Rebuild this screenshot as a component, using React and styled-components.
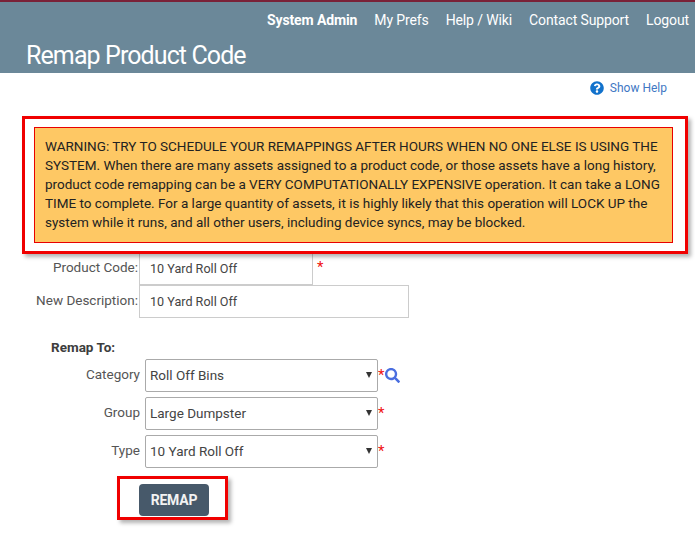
import styled, { createGlobalStyle } from "styled-components";
import { FaQuestionCircle, FaSearch } from "react-icons/fa";

const GlobalStyle = createGlobalStyle`
    body {
        margin: 0;
        background: #fff;
        font-family: Roboto, "Liberation Sans", sans-serif;
        color: #444;
    }
`
const Page = styled.div`
    width: 695px;
    height: 542px;
    overflow: hidden;
`
const Header = styled.header`
    height: 71px;
    background: #6b8899;
    border-top: 2px solid #7a2238;
    color: #fff;
    display: flex;
    flex-direction: column;
`
const Nav = styled.nav`
    display: flex;
    justify-content: flex-end;
    gap: 17px;
    padding: 8px 6px 0 0;
    font-size: 14px;
    line-height: 20px;
    letter-spacing: -0.12px;
`
const NavLink = styled.a`
    color: #fff;
    font-weight: ${(props) => (props.$active ? 700 : 400)};
`
const Title = styled.h1`
    margin: 11px 0 0 26px;
    font-size: 25px;
    line-height: 30px;
    font-weight: 400;
    letter-spacing: -0.9px;
`
const HelpBar = styled.div`
    height: 43px;
    display: flex;
    justify-content: flex-end;
    align-items: flex-start;
    gap: 6px;
    padding: 8px 28px 0 0;
    font-size: 12px;
    line-height: 15px;
    color: #3f78c4;
    box-sizing: border-box;
    svg {
        color: #1272cc;
        font-size: 14px;
    }
`
const Annotated = styled.div`
    position: relative;
    z-index: 1;
    box-sizing: border-box;
    border: 3px solid #f00000;
    box-shadow: 3px 3px 4px rgba(0, 0, 0, 0.3);
`
const WarningFrame = styled(Annotated)`
    width: 666px;
    height: 138px;
    margin-left: 22px;
    padding: 8px 12px 0 9px;
    background: #fff;
`
const Warning = styled.div`
    box-sizing: border-box;
    height: 116px;
    padding: 9px 10px 0;
    background: #fec864;
    border: 1px solid #e80000;
    color: #222;
    font-size: 13.5px;
    line-height: 19px;
`
const Fields = styled.div`
    display: flex;
    flex-direction: column;
    margin-top: -4px;
`
const TextRow = styled.div`
    display: flex;
    align-items: flex-start;
`
const TextLabel = styled.label`
    width: 138px;
    padding-top: ${(props) => props.$top}px;
    text-align: right;
    font-size: 13.5px;
    line-height: 18px;
    color: #555;
`
const TextInput = styled.div`
    box-sizing: border-box;
    width: ${(props) => props.$width}px;
    height: ${(props) => props.$height}px;
    margin-left: 1px;
    padding: ${(props) => props.$top}px 0 0 10px;
    border: 1px solid #ccc;
    font-size: 12.6px;
    line-height: 18px;
    color: #444;
`
const Star = styled.span`
    color: #f01010;
    font-size: 15px;
    line-height: 18px;
`
const RequiredStar = styled(Star)`
    margin: ${(props) => props.$top}px 0 0 ${(props) => props.$left}px;
`
const RemapHeading = styled.div`
    margin: 20px 0 0 51px;
    font-size: 13.5px;
    line-height: 18px;
    font-weight: 700;
    color: #3d3d3d;
`
const SelectList = styled.div`
    display: flex;
    flex-direction: column;
    gap: 5px;
    margin-top: 3px;
`
const SelectRow = styled.div`
    display: flex;
    align-items: flex-start;
`
const SelectLabel = styled.label`
    width: 140px;
    padding-top: 6px;
    text-align: right;
    font-size: 13.5px;
    line-height: 18px;
    color: #555;
`
const SelectBox = styled.div`
    position: relative;
    width: 233px;
    height: 33px;
    margin: 0 0 0 5px;
    &::after {
        content: "";
        position: absolute;
        right: 6px;
        top: 13px;
        border-left: 3.5px solid transparent;
        border-right: 3.5px solid transparent;
        border-top: 6px solid #333;
    }
`
const Select = styled.select`
    appearance: none;
    box-sizing: border-box;
    width: 100%;
    height: 100%;
    padding: 0 0 2px 4px;
    background: #fff;
    border: 1px solid #aaa;
    border-radius: 2px;
    font-family: inherit;
    font-size: 13.5px;
    color: #444;
`
const SearchIcon = styled(FaSearch)`
    margin: 9px 0 0 1px;
    color: #4a6ee0;
    font-size: 15px;
`
const ButtonFrame = styled(Annotated)`
    width: 111px;
    height: 44px;
    margin: 8px 0 0 117px;
    padding: 5px 0 0 19px;
`
const RemapButton = styled.button`
    width: 70px;
    height: 32px;
    padding: 0;
    background: #47596a;
    border: none;
    border-radius: 4px;
    color: #f2f2f2;
    font-family: inherit;
    font-size: 14px;
    font-weight: 700;
    letter-spacing: -0.2px;
`

const selects = [
    { label: "Category", value: "Roll Off Bins", search: true },
    { label: "Group", value: "Large Dumpster" },
    { label: "Type", value: "10 Yard Roll Off" },
];

const App = () => {
    return (
        <Page>
            <GlobalStyle />
            <Header>
                <Nav>
                    <NavLink $active>System Admin</NavLink>
                    <NavLink>My Prefs</NavLink>
                    <NavLink>Help / Wiki</NavLink>
                    <NavLink>Contact Support</NavLink>
                    <NavLink>Logout</NavLink>
                </Nav>
                <Title>Remap Product Code</Title>
            </Header>
            <HelpBar>
                <FaQuestionCircle />
                <span>Show Help</span>
            </HelpBar>
            <WarningFrame>
                <Warning>
                    WARNING: TRY TO SCHEDULE YOUR REMAPPINGS AFTER HOURS WHEN NO ONE ELSE IS USING THE SYSTEM. When there are many assets assigned to a product code, or those assets have a long history, product code remapping can be a VERY COMPUTATIONALLY EXPENSIVE operation. It can take a LONG TIME to complete. For a large quantity of assets, it is highly likely that this operation will LOCK UP the system while it runs, and all other users, including device syncs, may be blocked.
                </Warning>
            </WarningFrame>
            <Fields>
                <TextRow>
                    <TextLabel $top={8}>Product Code:</TextLabel>
                    <TextInput $width={174} $height={35} $top={9}>10 Yard Roll Off</TextInput>
                    <RequiredStar $top={8} $left={4}>*</RequiredStar>
                </TextRow>
                <TextRow>
                    <TextLabel $top={6}>New Description:</TextLabel>
                    <TextInput $width={270} $height={33} $top={7}>10 Yard Roll Off</TextInput>
                </TextRow>
            </Fields>
            <RemapHeading>Remap To:</RemapHeading>
            <SelectList>
                {selects.map((item) => (
                    <SelectRow key={item.label}>
                        <SelectLabel>{item.label}</SelectLabel>
                        <SelectBox>
                            <Select defaultValue={item.value}>
                                <option>{item.value}</option>
                            </Select>
                        </SelectBox>
                        <RequiredStar $top={7} $left={0}>*</RequiredStar>
                        {item.search ? <SearchIcon /> : <></>}
                    </SelectRow>
                ))}
            </SelectList>
            <ButtonFrame>
                <RemapButton>REMAP</RemapButton>
            </ButtonFrame>
        </Page>
    )
}

export default App;
